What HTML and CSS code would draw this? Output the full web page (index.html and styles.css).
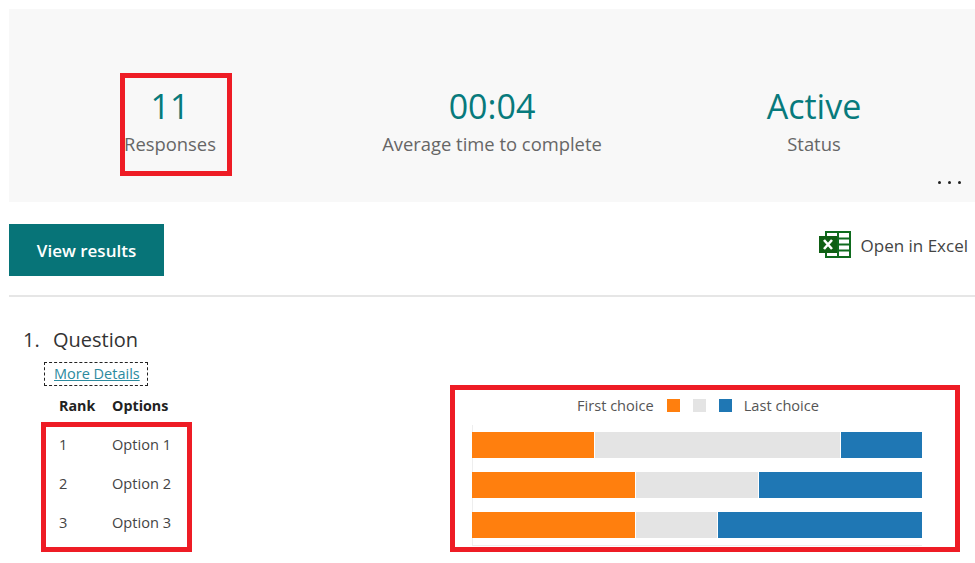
FILE: index.html
```html
<!DOCTYPE html>
<html lang="en">
  <head>
    <meta charset="UTF-8" />
    <meta name="viewport" content="width=device-width, initial-scale=1.0" />
    <title>Form responses</title>
    <link rel="stylesheet" href="styles.css">
  </head>
  <body>
    <div class="summary">
      <div class="stat">
        <div class="stat-value">11</div>
        <div class="stat-label">Responses</div>
      </div>
      <div class="stat">
        <div class="stat-value">00:04</div>
        <div class="stat-label">Average time to complete</div>
      </div>
      <div class="stat">
        <div class="stat-value">Active</div>
        <div class="stat-label">Status</div>
      </div>
      <div class="more-dots"><span></span><span></span><span></span></div>
    </div>

    <div class="actions">
      <button class="view-results">View results</button>
      <div class="open-excel">
        <svg class="excel-icon" viewBox="0 0 32 27" width="32" height="27">
          <rect x="7" y="1" width="24" height="25" fill="#fff" stroke="#0f6b1e" stroke-width="2" />
          <path d="M7 7.5H31M7 13.5H31M7 19.5H31M19 1V26" stroke="#0f6b1e" stroke-width="2" fill="none" />
          <rect x="0" y="5" width="18" height="17" fill="#0f5f14" />
          <path d="M5 9L13 18M13 9L5 18" stroke="#fff" stroke-width="2.6" fill="none" />
        </svg>
        <span>Open in Excel</span>
      </div>
    </div>

    <div class="question">
      <div class="question-left">
        <div class="question-title"><span class="question-num">1.</span>Question</div>
        <a class="more-details" href="#">More Details</a>
        <table class="rank-table">
          <tr><th class="rank-col">Rank</th><th>Options</th></tr>
          <tr><td class="rank-col">1</td><td>Option 1</td></tr>
          <tr><td class="rank-col">2</td><td>Option 2</td></tr>
          <tr><td class="rank-col">3</td><td>Option 3</td></tr>
        </table>
      </div>
      <div class="chart">
        <div class="legend">
          <span>First choice</span>
          <i class="swatch first"></i>
          <i class="swatch middle"></i>
          <i class="swatch last"></i>
          <span class="legend-last">Last choice</span>
        </div>
        <div class="bars">
          <div class="bar">
            <div class="seg first" style="flex-grow: 3"></div>
            <div class="seg middle" style="flex-grow: 6"></div>
            <div class="seg last" style="flex-grow: 2"></div>
          </div>
          <div class="bar">
            <div class="seg first" style="flex-grow: 4"></div>
            <div class="seg middle" style="flex-grow: 3"></div>
            <div class="seg last" style="flex-grow: 4"></div>
          </div>
          <div class="bar">
            <div class="seg first" style="flex-grow: 4"></div>
            <div class="seg middle" style="flex-grow: 2"></div>
            <div class="seg last" style="flex-grow: 5"></div>
          </div>
        </div>
      </div>
    </div>

    <div class="callout callout-responses"></div>
    <div class="callout callout-options"></div>
    <div class="callout callout-chart"></div>
  </body>
</html>
```

FILE: styles.css
```css
body {
  margin: 0;
  padding: 9px 0 0 9px;
  height: 563px;
  box-sizing: border-box;
  overflow: hidden;
  background-color: #fff;
  font-family: "Open Sans", "Noto Sans", sans-serif;
  color: #333;
}

.summary {
  position: relative;
  display: flex;
  height: 193px;
  padding-top: 72px;
  box-sizing: border-box;
  background-color: #f8f8f8;
}

.stat {
  flex: 1;
  text-align: center;
}

.stat-value {
  font-size: 34px;
  line-height: 50px;
  color: #077a7c;
}

.stat-label {
  font-size: 18.4px;
  line-height: 26px;
  color: #666;
}

.more-dots {
  position: absolute;
  right: 14px;
  bottom: 18px;
  display: flex;
  gap: 7px;
}

.more-dots span {
  width: 3px;
  height: 3px;
  border-radius: 50%;
  background-color: #222;
}

.actions {
  display: flex;
  justify-content: space-between;
  padding: 22px 0 19px;
  border-bottom: 2px solid #e6e6e6;
}

.view-results {
  width: 155px;
  height: 52px;
  border: none;
  background-color: #077478;
  color: #fff;
  font-family: inherit;
  font-size: 17px;
  font-weight: 600;
}

.open-excel {
  display: flex;
  align-items: flex-start;
  gap: 10px;
  padding: 7px 7px 0 0;
  font-size: 17px;
  line-height: 29px;
  color: #444;
}

.question {
  display: flex;
}

.question-left {
  width: 441px;
  padding: 29px 0 0 14px;
  box-sizing: border-box;
}

.question-title {
  font-size: 20px;
  line-height: 28px;
}

.question-num {
  display: inline-block;
  width: 30px;
}

.more-details {
  display: inline-block;
  margin: 8px 0 0 21px;
  padding: 0 7px 0 9px;
  border: 1px dashed #222;
  font-size: 14.5px;
  line-height: 22px;
  color: #2b8a9e;
}

.rank-table {
  border-collapse: collapse;
  margin: 0 0 0 36px;
  font-size: 14.6px;
}

.rank-table th {
  height: 38px;
  padding: 0;
  text-align: left;
  font-size: 14.3px;
  font-weight: 700;
  color: #222;
}

.rank-table td {
  height: 39px;
  padding: 0;
  color: #444;
}

.rank-col {
  width: 53px;
}

.chart {
  padding: 98px 0 0 22px;
}

.legend {
  display: flex;
  align-items: center;
  height: 20px;
  padding-left: 105px;
  font-size: 14.6px;
  color: #555;
}

.swatch {
  width: 13px;
  height: 13px;
  margin-left: 13px;
}

.legend-last {
  margin-left: 12px;
}

.bars {
  display: flex;
  flex-direction: column;
  gap: 14px;
  width: 449px;
  margin-top: 10px;
  padding: 7px 0;
  border-left: 1px solid #eee;
  border-bottom: 1px solid #eee;
}

.bar {
  display: flex;
  gap: 1px;
  height: 26px;
  margin-left: -1px;
}

.seg {
  flex-basis: 0;
}

.first {
  background-color: #ff7f0e;
}

.middle {
  background-color: #e4e4e4;
}

.last {
  background-color: #1f77b4;
}

/* red annotation boxes drawn over the page */
.callout {
  position: absolute;
  box-sizing: border-box;
  border: 5px solid #ee1c25;
}

.callout-responses {
  left: 120px;
  top: 73px;
  width: 112px;
  height: 103px;
}

.callout-options {
  left: 41px;
  top: 422px;
  width: 151px;
  height: 130px;
}

.callout-chart {
  left: 450px;
  top: 385px;
  width: 510px;
  height: 167px;
}
```
